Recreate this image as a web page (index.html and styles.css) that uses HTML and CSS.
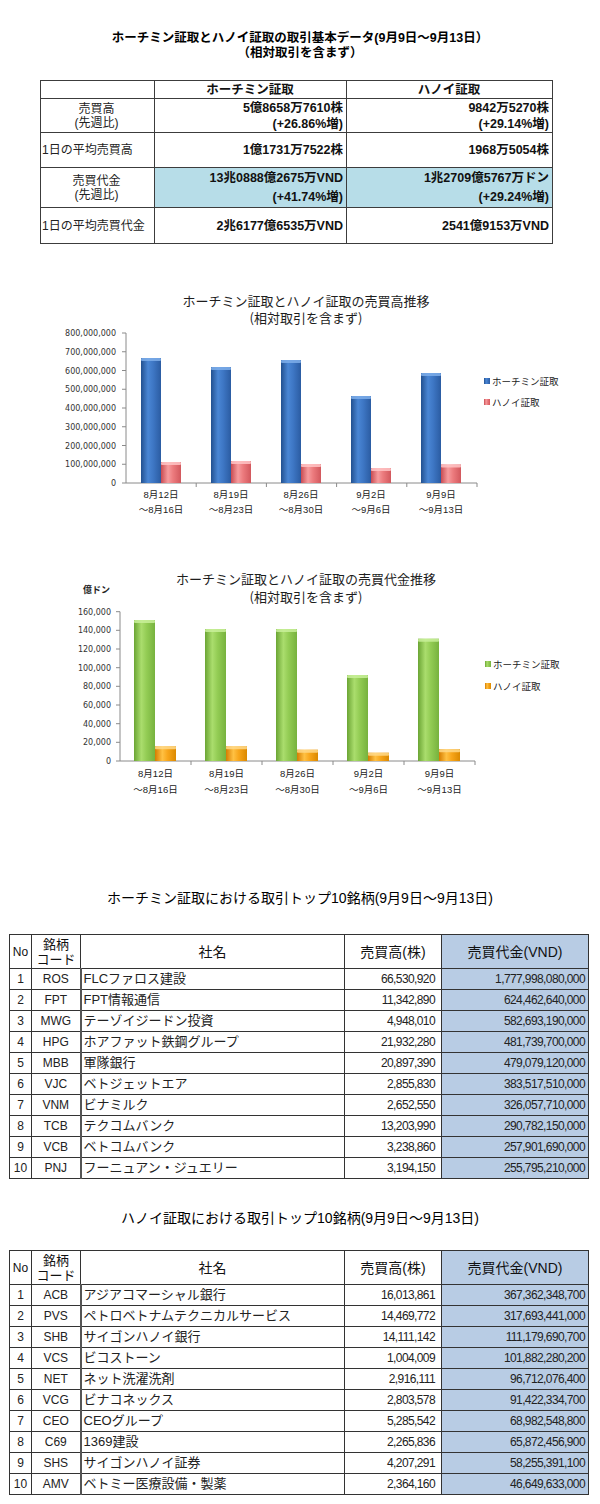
FILE: index.html
```html
<!DOCTYPE html>
<html lang="ja">
<head>
<meta charset="utf-8">
<title>ホーチミン証取とハノイ証取の取引基本データ</title>
<link rel="stylesheet" href="styles.css">
</head>
<body>
<div class="page">
  <section class="summary">
    <h1 class="summary-title">ホーチミン証取とハノイ証取の取引基本データ(9月9日～9月13日）<br>（相対取引を含まず）</h1>
    <table class="summary-table">
      <colgroup><col class="c-label"><col class="c-hcm"><col class="c-hn"></colgroup>
      <tr class="r-head"><th></th><th>ホーチミン証取</th><th>ハノイ証取</th></tr>
      <tr class="r-vol"><td class="label center">売買高<br>(先週比)</td><td class="val">5億8658万7610株<br>(+26.86%増)</td><td class="val">9842万5270株<br>(+29.14%増)</td></tr>
      <tr class="r-avgvol"><td class="label">1日の平均売買高</td><td class="val">1億1731万7522株</td><td class="val">1968万5054株</td></tr>
      <tr class="r-value"><td class="label center">売買代金<br>(先週比)</td><td class="val hl">13兆0888億2675万VND<br>(+41.74%増)</td><td class="val hl">1兆2709億5767万ドン<br>(+29.24%増)</td></tr>
      <tr class="r-avgval"><td class="label">1日の平均売買代金</td><td class="val">2兆6177億6535万VND</td><td class="val">2541億9153万VND</td></tr>
    </table>
  </section>

  <figure class="chart chart-volume">
    <svg width="600" height="240" viewBox="0 0 600 240" xmlns="http://www.w3.org/2000/svg">
      <defs>
        <linearGradient id="gBlue" x1="0" y1="0" x2="1" y2="0">
          <stop offset="0" stop-color="#22508f"/><stop offset="0.35" stop-color="#4a86d4"/><stop offset="0.6" stop-color="#3e77c5"/><stop offset="1" stop-color="#2b5ca2"/>
        </linearGradient>
        <linearGradient id="gPink" x1="0" y1="0" x2="1" y2="0">
          <stop offset="0" stop-color="#c94b51"/><stop offset="0.35" stop-color="#f69c9e"/><stop offset="0.6" stop-color="#ec7b7e"/><stop offset="1" stop-color="#d2585d"/>
        </linearGradient>
      </defs>
      <g transform="translate(0 -280)">
        <text class="c-title" x="306" y="305">ホーチミン証取とハノイ証取の売買高推移</text>
        <text class="c-title" x="306" y="322">(相対取引を含まず)</text>
        <g class="c-ylabels">
          <text x="116" y="335">800,000,000</text>
          <text x="116" y="353.75">700,000,000</text>
          <text x="116" y="372.5">600,000,000</text>
          <text x="116" y="391.25">500,000,000</text>
          <text x="116" y="410">400,000,000</text>
          <text x="116" y="428.75">300,000,000</text>
          <text x="116" y="447.5">200,000,000</text>
          <text x="116" y="466.25">100,000,000</text>
          <text x="116" y="485">0</text>
        </g>
        <g class="c-axis">
          <line x1="126" y1="332" x2="126" y2="482"/>
          <line x1="126" y1="482" x2="477" y2="482"/>
          <line x1="122" y1="332" x2="126" y2="332"/><line x1="122" y1="350.75" x2="126" y2="350.75"/>
          <line x1="122" y1="369.5" x2="126" y2="369.5"/><line x1="122" y1="388.25" x2="126" y2="388.25"/>
          <line x1="122" y1="407" x2="126" y2="407"/><line x1="122" y1="425.75" x2="126" y2="425.75"/>
          <line x1="122" y1="444.5" x2="126" y2="444.5"/><line x1="122" y1="463.25" x2="126" y2="463.25"/>
          <line x1="122" y1="482" x2="126" y2="482"/>
          <line x1="196.2" y1="482" x2="196.2" y2="486"/><line x1="266.4" y1="482" x2="266.4" y2="486"/>
          <line x1="336.6" y1="482" x2="336.6" y2="486"/><line x1="406.8" y1="482" x2="406.8" y2="486"/>
          <line x1="477" y1="482" x2="477" y2="486"/>
        </g>
        <g class="bars">
          <rect x="141" y="357" width="20" height="125" fill="url(#gBlue)"/><rect class="cap-blue" x="141" y="357" width="20" height="3" rx="1"/>
          <rect x="161" y="461" width="20" height="21" fill="url(#gPink)"/><rect class="cap-pink" x="161" y="461" width="20" height="3" rx="1"/>
          <rect x="211" y="366" width="20" height="116" fill="url(#gBlue)"/><rect class="cap-blue" x="211" y="366" width="20" height="3" rx="1"/>
          <rect x="231" y="460" width="20" height="22" fill="url(#gPink)"/><rect class="cap-pink" x="231" y="460" width="20" height="3" rx="1"/>
          <rect x="281" y="359" width="20" height="123" fill="url(#gBlue)"/><rect class="cap-blue" x="281" y="359" width="20" height="3" rx="1"/>
          <rect x="301" y="463" width="20" height="19" fill="url(#gPink)"/><rect class="cap-pink" x="301" y="463" width="20" height="3" rx="1"/>
          <rect x="351" y="395" width="20" height="87" fill="url(#gBlue)"/><rect class="cap-blue" x="351" y="395" width="20" height="3" rx="1"/>
          <rect x="371" y="467" width="20" height="15" fill="url(#gPink)"/><rect class="cap-pink" x="371" y="467" width="20" height="3" rx="1"/>
          <rect x="421" y="372" width="20" height="110" fill="url(#gBlue)"/><rect class="cap-blue" x="421" y="372" width="20" height="3" rx="1"/>
          <rect x="441" y="463.5" width="20" height="18.5" fill="url(#gPink)"/><rect class="cap-pink" x="441" y="463.5" width="20" height="3" rx="1"/>
        </g>
        <g class="c-xlabels">
          <text x="161" y="497">8月12日</text><text x="161" y="512">～8月16日</text>
          <text x="231" y="497">8月19日</text><text x="231" y="512">～8月23日</text>
          <text x="301" y="497">8月26日</text><text x="301" y="512">～8月30日</text>
          <text x="371" y="497">9月2日</text><text x="371" y="512">～9月6日</text>
          <text x="441" y="497">9月9日</text><text x="441" y="512">～9月13日</text>
        </g>
        <g class="c-legend">
          <rect x="484" y="377" width="6" height="6" fill="url(#gBlue)"/>
          <text x="492" y="384">ホーチミン証取</text>
          <rect x="484" y="398" width="6" height="6" fill="url(#gPink)"/>
          <text x="492" y="405">ハノイ証取</text>
        </g>
      </g>
    </svg>
  </figure>

  <figure class="chart chart-value">
    <svg width="600" height="240" viewBox="0 0 600 240" xmlns="http://www.w3.org/2000/svg">
      <defs>
        <linearGradient id="gGreen" x1="0" y1="0" x2="1" y2="0">
          <stop offset="0" stop-color="#6ba534"/><stop offset="0.35" stop-color="#aadd6d"/><stop offset="0.6" stop-color="#93cc54"/><stop offset="1" stop-color="#77b23e"/>
        </linearGradient>
        <linearGradient id="gOrange" x1="0" y1="0" x2="1" y2="0">
          <stop offset="0" stop-color="#d57c00"/><stop offset="0.35" stop-color="#ffc143"/><stop offset="0.6" stop-color="#f8a61b"/><stop offset="1" stop-color="#db8900"/>
        </linearGradient>
      </defs>
      <g transform="translate(0 -560)">
        <text class="c-title" x="306" y="583">ホーチミン証取とハノイ証取の売買代金推移</text>
        <text class="c-title" x="306" y="601">(相対取引を含まず)</text>
        <text class="c-unit" x="83" y="592">億ドン</text>
        <g class="c-ylabels">
          <text x="111" y="613.7">160,000</text>
          <text x="111" y="632.3">140,000</text>
          <text x="111" y="651">120,000</text>
          <text x="111" y="669.7">100,000</text>
          <text x="111" y="688.3">80,000</text>
          <text x="111" y="707">60,000</text>
          <text x="111" y="725.7">40,000</text>
          <text x="111" y="744.3">20,000</text>
          <text x="111" y="763">0</text>
        </g>
        <g class="c-axis">
          <line x1="120" y1="610.7" x2="120" y2="760"/>
          <line x1="120" y1="760" x2="475" y2="760"/>
          <line x1="116" y1="610.7" x2="120" y2="610.7"/><line x1="116" y1="629.3" x2="120" y2="629.3"/>
          <line x1="116" y1="648" x2="120" y2="648"/><line x1="116" y1="666.7" x2="120" y2="666.7"/>
          <line x1="116" y1="685.3" x2="120" y2="685.3"/><line x1="116" y1="704" x2="120" y2="704"/>
          <line x1="116" y1="722.7" x2="120" y2="722.7"/><line x1="116" y1="741.3" x2="120" y2="741.3"/>
          <line x1="116" y1="760" x2="120" y2="760"/>
          <line x1="191" y1="760" x2="191" y2="764"/><line x1="262" y1="760" x2="262" y2="764"/>
          <line x1="333" y1="760" x2="333" y2="764"/><line x1="404" y1="760" x2="404" y2="764"/>
          <line x1="475" y1="760" x2="475" y2="764"/>
        </g>
        <g class="bars">
          <rect x="134" y="619" width="21" height="141" fill="url(#gGreen)"/><rect class="cap-green" x="134" y="619" width="21" height="3" rx="1"/>
          <rect x="155" y="745.3" width="21" height="14.7" fill="url(#gOrange)"/><rect class="cap-orange" x="155" y="745.3" width="21" height="3" rx="1"/>
          <rect x="205" y="628" width="21" height="132" fill="url(#gGreen)"/><rect class="cap-green" x="205" y="628" width="21" height="3" rx="1"/>
          <rect x="226" y="745.3" width="21" height="14.7" fill="url(#gOrange)"/><rect class="cap-orange" x="226" y="745.3" width="21" height="3" rx="1"/>
          <rect x="276" y="628" width="21" height="132" fill="url(#gGreen)"/><rect class="cap-green" x="276" y="628" width="21" height="3" rx="1"/>
          <rect x="297" y="748.7" width="21" height="11.3" fill="url(#gOrange)"/><rect class="cap-orange" x="297" y="748.7" width="21" height="3" rx="1"/>
          <rect x="347" y="674" width="21" height="86" fill="url(#gGreen)"/><rect class="cap-green" x="347" y="674" width="21" height="3" rx="1"/>
          <rect x="368" y="751.7" width="21" height="8.3" fill="url(#gOrange)"/><rect class="cap-orange" x="368" y="751.7" width="21" height="3" rx="1"/>
          <rect x="418" y="637.7" width="21" height="122.3" fill="url(#gGreen)"/><rect class="cap-green" x="418" y="637.7" width="21" height="3" rx="1"/>
          <rect x="439" y="748.2" width="21" height="11.8" fill="url(#gOrange)"/><rect class="cap-orange" x="439" y="748.2" width="21" height="3" rx="1"/>
        </g>
        <g class="c-xlabels">
          <text x="155.5" y="776">8月12日</text><text x="155.5" y="792">～8月16日</text>
          <text x="226.5" y="776">8月19日</text><text x="226.5" y="792">～8月23日</text>
          <text x="297.5" y="776">8月26日</text><text x="297.5" y="792">～8月30日</text>
          <text x="368.5" y="776">9月2日</text><text x="368.5" y="792">～9月6日</text>
          <text x="439.5" y="776">9月9日</text><text x="439.5" y="792">～9月13日</text>
        </g>
        <g class="c-legend">
          <rect x="485" y="660" width="6" height="6" fill="url(#gGreen)"/>
          <text x="493" y="667">ホーチミン証取</text>
          <rect x="485" y="682" width="6" height="6" fill="url(#gOrange)"/>
          <text x="493" y="689">ハノイ証取</text>
        </g>
      </g>
    </svg>
  </figure>

  <section class="ranking ranking-hcm">
    <h2 class="rank-title">ホーチミン証取における取引トップ10銘柄(9月9日～9月13日)</h2>
    <table class="rank-table">
      <colgroup><col class="k-no"><col class="k-code"><col class="k-name"><col class="k-vol"><col class="k-val"></colgroup>
      <tr class="k-head"><th class="h-no">No</th><th class="h-code">銘柄<br>コード</th><th class="h-name">社名</th><th class="h-vol">売買高(株)</th><th class="h-val">売買代金(VND)</th></tr>
      <tr><td class="no">1</td><td class="code">ROS</td><td class="name">FLCファロス建設</td><td class="num">66,530,920</td><td class="num val">1,777,998,080,000</td></tr>
      <tr><td class="no">2</td><td class="code">FPT</td><td class="name">FPT情報通信</td><td class="num">11,342,890</td><td class="num val">624,462,640,000</td></tr>
      <tr><td class="no">3</td><td class="code">MWG</td><td class="name">テーゾイジードン投資</td><td class="num">4,948,010</td><td class="num val">582,693,190,000</td></tr>
      <tr><td class="no">4</td><td class="code">HPG</td><td class="name">ホアファット鉄鋼グループ</td><td class="num">21,932,280</td><td class="num val">481,739,700,000</td></tr>
      <tr><td class="no">5</td><td class="code">MBB</td><td class="name">軍隊銀行</td><td class="num">20,897,390</td><td class="num val">479,079,120,000</td></tr>
      <tr><td class="no">6</td><td class="code">VJC</td><td class="name">ベトジェットエア</td><td class="num">2,855,830</td><td class="num val">383,517,510,000</td></tr>
      <tr><td class="no">7</td><td class="code">VNM</td><td class="name">ビナミルク</td><td class="num">2,652,550</td><td class="num val">326,057,710,000</td></tr>
      <tr><td class="no">8</td><td class="code">TCB</td><td class="name">テクコムバンク</td><td class="num">13,203,990</td><td class="num val">290,782,150,000</td></tr>
      <tr><td class="no">9</td><td class="code">VCB</td><td class="name">ベトコムバンク</td><td class="num">3,238,860</td><td class="num val">257,901,690,000</td></tr>
      <tr><td class="no">10</td><td class="code">PNJ</td><td class="name">フーニュアン・ジュエリー</td><td class="num">3,194,150</td><td class="num val">255,795,210,000</td></tr>
    </table>
  </section>

  <section class="ranking ranking-hn">
    <h2 class="rank-title">ハノイ証取における取引トップ10銘柄(9月9日～9月13日)</h2>
    <table class="rank-table">
      <colgroup><col class="k-no"><col class="k-code"><col class="k-name"><col class="k-vol"><col class="k-val"></colgroup>
      <tr class="k-head"><th class="h-no">No</th><th class="h-code">銘柄<br>コード</th><th class="h-name">社名</th><th class="h-vol">売買高(株)</th><th class="h-val">売買代金(VND)</th></tr>
      <tr><td class="no">1</td><td class="code">ACB</td><td class="name">アジアコマーシャル銀行</td><td class="num">16,013,861</td><td class="num val">367,362,348,700</td></tr>
      <tr><td class="no">2</td><td class="code">PVS</td><td class="name">ペトロベトナムテクニカルサービス</td><td class="num">14,469,772</td><td class="num val">317,693,441,000</td></tr>
      <tr><td class="no">3</td><td class="code">SHB</td><td class="name">サイゴンハノイ銀行</td><td class="num">14,111,142</td><td class="num val">111,179,690,700</td></tr>
      <tr><td class="no">4</td><td class="code">VCS</td><td class="name">ビコストーン</td><td class="num">1,004,009</td><td class="num val">101,882,280,200</td></tr>
      <tr><td class="no">5</td><td class="code">NET</td><td class="name">ネット洗濯洗剤</td><td class="num">2,916,111</td><td class="num val">96,712,076,400</td></tr>
      <tr><td class="no">6</td><td class="code">VCG</td><td class="name">ビナコネックス</td><td class="num">2,803,578</td><td class="num val">91,422,334,700</td></tr>
      <tr><td class="no">7</td><td class="code">CEO</td><td class="name">CEOグループ</td><td class="num">5,285,542</td><td class="num val">68,982,548,800</td></tr>
      <tr><td class="no">8</td><td class="code">C69</td><td class="name">1369建設</td><td class="num">2,265,836</td><td class="num val">65,872,456,900</td></tr>
      <tr><td class="no">9</td><td class="code">SHS</td><td class="name">サイゴンハノイ証券</td><td class="num">4,207,291</td><td class="num val">58,255,391,100</td></tr>
      <tr><td class="no">10</td><td class="code">AMV</td><td class="name">ベトミー医療設備・製薬</td><td class="num">2,364,160</td><td class="num val">46,649,633,000</td></tr>
    </table>
  </section>
</div>
</body>
</html>
```

FILE: styles.css
```css
* { box-sizing: border-box; }

html, body {
  margin: 0;
  padding: 0;
  background: #ffffff;
}

body {
  color: #111111;
  font-family: "Liberation Sans", "Noto Sans CJK JP", sans-serif;
}

.page {
  width: 600px;
  height: 1504px;
  overflow: hidden;
}

/* ---------- summary ---------- */
.summary {
  padding-top: 31px;
}

.summary-title {
  margin: 0;
  font-size: 12.5px;
  line-height: 15px;
  font-weight: bold;
  text-align: center;
  color: #000;
}

.summary-table {
  margin: 19px 0 0 40px;
  width: 512px;
  border-collapse: collapse;
  table-layout: fixed;
  font-size: 12.5px;
}

.c-label { width: 114px; }
.c-hcm { width: 192px; }
.c-hn { width: 206px; }

.summary-table th,
.summary-table td {
  border: 1px solid #3c3c3c;
  padding: 0 3px 0 2px;
  vertical-align: middle;
}

.summary-table th {
  font-weight: bold;
  text-align: center;
  line-height: 16px;
}

.r-head { height: 18px; }
.r-vol { height: 34px; }
.r-avgvol { height: 35px; }
.r-value { height: 40px; }
.r-avgval { height: 36px; }

.summary-table .label {
  font-size: 12px;
  font-weight: normal;
  text-align: left;
  padding-left: 1px;
  line-height: 14px;
  color: #222;
}

.summary-table .label.center {
  text-align: center;
}

.summary-table .val {
  font-weight: bold;
  text-align: right;
  line-height: 16px;
}

.r-value .val { line-height: 19px; }

.summary-table .hl {
  background: #b7dde8;
}

/* ---------- charts ---------- */
.chart {
  margin: 0;
  display: block;
}

.chart svg { display: block; }

.chart-volume { margin-top: 37px; }
.chart-value { margin-top: 40px; }

.c-title {
  font-family: "Noto Sans CJK JP", sans-serif;
  font-size: 13px;
  fill: #1e1e1e;
  text-anchor: middle;
}

.c-unit {
  font-family: "Noto Sans CJK JP", sans-serif;
  font-size: 9px;
  font-weight: bold;
  fill: #222;
}

.c-ylabels text {
  font-family: "DejaVu Sans", sans-serif;
  font-size: 8px;
  fill: #333;
  text-anchor: end;
}

.c-axis line {
  stroke: #8a8a8a;
  stroke-width: 1;
}

.c-xlabels text {
  font-family: "Liberation Sans", "Noto Sans CJK JP", sans-serif;
  font-size: 9.5px;
  fill: #222;
  text-anchor: middle;
}

.c-legend text {
  font-family: "Noto Sans CJK JP", sans-serif;
  font-size: 9.5px;
  fill: #222;
}

.cap-blue { fill: #7eaeea; opacity: 0.85; }
.cap-pink { fill: #ffc4c5; opacity: 0.85; }
.cap-green { fill: #c9f09a; opacity: 0.85; }
.cap-orange { fill: #ffd98a; opacity: 0.85; }

/* ---------- ranking tables ---------- */
.ranking-hcm .rank-title { margin-top: 87px; }
.ranking-hn .rank-title { margin-top: 29px; }
.ranking-hcm .rank-table { margin-top: 26px; }
.ranking-hn .rank-table { margin-top: 22px; }

.rank-title {
  margin: 0;
  font-family: "Liberation Sans", "Noto Sans CJK JP", sans-serif;
  font-size: 14px;
  line-height: 20px;
  font-weight: normal;
  text-align: center;
  color: #000;
}

.rank-table {
  margin-left: 9px;
  width: 579px;
  border-collapse: collapse;
  table-layout: fixed;
  color: #222;
}

.k-no { width: 22px; }
.k-code { width: 49px; }
.k-name { width: 264px; }
.k-vol { width: 97px; }
.k-val { width: 147px; }

.rank-table th,
.rank-table td {
  border: 1px solid #333333;
  padding: 0;
  vertical-align: middle;
  white-space: nowrap;
  overflow: hidden;
}

.rank-table tr { height: 21px; }
.rank-table .k-head { height: 34px; }

.rank-table th {
  font-weight: normal;
  color: #111;
  text-align: center;
  font-size: 14px;
  line-height: 16px;
}

.rank-table .h-no { font-size: 12px; }
.rank-table .h-code { font-size: 13px; line-height: 15px; }
.rank-table .h-val { background: #b8cce4; }

.rank-table .no {
  text-align: center;
  font-size: 12px;
}

.rank-table .code {
  text-align: center;
  font-size: 12px;
}

.rank-table .name {
  border-left: 2px solid #555;
  padding-left: 2px;
  font-family: "Liberation Sans", "Noto Sans CJK JP", sans-serif;
  font-size: 13px;
  line-height: 16px;
}

.rank-table .num {
  text-align: right;
  font-size: 12px;
  letter-spacing: -0.6px;
  padding-right: 6px;
}

.rank-table .num.val {
  background: #b8cce4;
  padding-right: 3px;
}
```
